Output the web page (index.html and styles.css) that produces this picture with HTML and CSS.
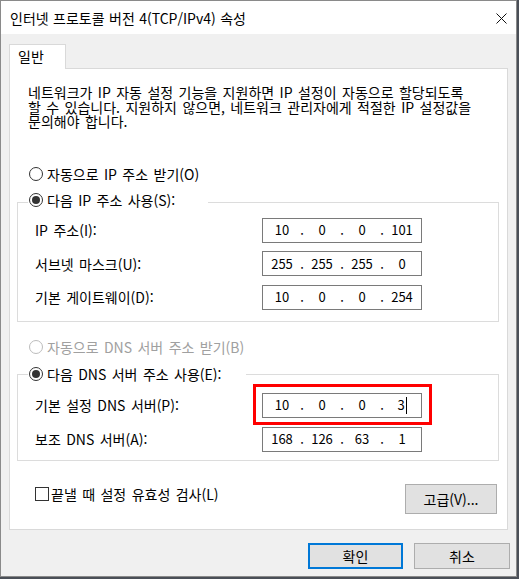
FILE: index.html
```html
<!DOCTYPE html>
<html lang="ko">
<head>
<meta charset="utf-8">
<title>인터넷 프로토콜 버전 4(TCP/IPv4) 속성</title>
<link rel="stylesheet" href="styles.css">
</head>
<body>
<div class="window">
  <div class="titlebar">
    <span class="title">인터넷 프로토콜 버전 4(TCP/IPv4) 속성</span>
    <svg class="close" viewBox="0 0 11 11" width="11" height="11"><path d="M0.5 0.5 L10.5 10.5 M10.5 0.5 L0.5 10.5" stroke="#111" stroke-width="1" fill="none"/></svg>
  </div>
  <div class="body">
    <div class="tabs"><div class="tab">일반</div></div>
    <div class="panel">
      <div class="desc">
        <span class="dline">네트워크가 IP 자동 설정 기능을 지원하면 IP 설정이 자동으로 할당되도록</span>
        <span class="dline">할 수 있습니다. 지원하지 않으면, 네트워크 관리자에게 적절한 IP 설정값을</span>
        <span class="dline">문의해야 합니다.</span>
      </div>

      <div class="opt opt-auto-ip"><span class="radio"></span><span>자동으로 IP 주소 받기(O)</span></div>

      <div class="group g-ip">
        <div class="legend legend-ip"><span class="radio on"></span><span>다음 IP 주소 사용(S):</span></div>
        <div class="rows rows-ip">
          <div class="row"><span class="lbl">IP 주소(I):</span>
            <div class="ipbox"><span class="oct">10</span><span class="dot">.</span><span class="oct">0</span><span class="dot">.</span><span class="oct">0</span><span class="dot">.</span><span class="oct">101</span></div>
          </div>
          <div class="row"><span class="lbl">서브넷 마스크(U):</span>
            <div class="ipbox"><span class="oct">255</span><span class="dot">.</span><span class="oct">255</span><span class="dot">.</span><span class="oct">255</span><span class="dot">.</span><span class="oct">0</span></div>
          </div>
          <div class="row"><span class="lbl">기본 게이트웨이(D):</span>
            <div class="ipbox"><span class="oct">10</span><span class="dot">.</span><span class="oct">0</span><span class="dot">.</span><span class="oct">0</span><span class="dot">.</span><span class="oct">254</span></div>
          </div>
        </div>
      </div>

      <div class="opt opt-auto-dns disabled"><span class="radio dis"></span><span>자동으로 DNS 서버 주소 받기(B)</span></div>

      <div class="group g-dns">
        <div class="legend legend-dns"><span class="radio on"></span><span>다음 DNS 서버 주소 사용(E):</span></div>
        <div class="rows rows-dns">
          <div class="row"><span class="lbl">기본 설정 DNS 서버(P):</span>
            <div class="ipwrap">
              <div class="ipbox"><span class="oct">10</span><span class="dot">.</span><span class="oct">0</span><span class="dot">.</span><span class="oct">0</span><span class="dot">.</span><span class="oct">3<span class="caret"></span></span></div>
              <div class="hl"></div>
            </div>
          </div>
          <div class="row"><span class="lbl">보조 DNS 서버(A):</span>
            <div class="ipbox"><span class="oct">168</span><span class="dot">.</span><span class="oct">126</span><span class="dot">.</span><span class="oct">63</span><span class="dot">.</span><span class="oct">1</span></div>
          </div>
        </div>
      </div>

      <div class="bottom">
        <div class="check"><span class="box"></span><span>끝낼 때 설정 유효성 검사(L)</span></div>
        <div class="btn btn-adv">고급(V)...</div>
      </div>
    </div>
    <div class="actions">
      <div class="btn btn-ok">확인</div>
      <div class="btn btn-cancel">취소</div>
    </div>
  </div>
</div>
</body>
</html>
```

FILE: styles.css
```css
* { box-sizing: border-box; }
html, body { margin: 0; padding: 0; }
body {
  background: #4a4f57;
  width: 519px;
  height: 579px;
  overflow: hidden;
  font-family: "Noto Sans CJK KR", "Noto Sans", sans-serif;
  font-size: 14px;
  word-spacing: 1.5px;
  color: #000;
}
.window {
  width: 517px;
  height: 577px;
  border: 1px solid #8a8a8a;
  background: #f0f0f0;
  display: flex;
  flex-direction: column;
}
.titlebar {
  flex: none;
  height: 33px;
  background: #fff;
  display: flex;
  align-items: center;
  justify-content: space-between;
  padding: 0 9px 0 9px;
}
.title { line-height: 16px; word-spacing: 0.5px; }
.close { display: block; margin-top: 1px; }
.body {
  flex: 1;
  display: flex;
  flex-direction: column;
  padding: 10px 8px 0 8px;
}
.tabs { display: flex; }
.tab {
  position: relative;
  z-index: 1;
  width: 57px;
  height: 25px;
  border: 1px solid #d9d9d9;
  border-bottom: none;
  background: #fff;
  margin-bottom: -1px;
  padding: 3px 0 0 8px;
  line-height: 16px;
}
.panel {
  width: 499px;
  height: 462px;
  border: 1px solid #d9d9d9;
  background: #fff;
  display: flex;
  flex-direction: column;
}
.desc {
  display: flex;
  flex-direction: column;
  margin: 16px 0 0 18px;
}
.dline {
  display: block;
  height: 14.5px;
  line-height: 14.5px;
  white-space: nowrap;
}
.opt {
  display: flex;
  align-items: center;
  gap: 4px;
  height: 16px;
  line-height: 16px;
  margin-left: 19px;
}
.opt-auto-ip { margin-top: 37px; }
.opt-auto-dns { margin-top: 17px; }
.disabled { color: #a0a0a0; }
.radio {
  flex: none;
  width: 14px;
  height: 14px;
  border-radius: 50%;
  border: 1px solid #333;
  background: #fff;
  display: flex;
  align-items: center;
  justify-content: center;
}
.radio.on::after {
  content: "";
  width: 8px;
  height: 8px;
  border-radius: 50%;
  background: #333;
}
.radio.dis { border-color: #bcbcbc; }
.group {
  width: 482px;
  margin: 20px 0 0 7px;
  border: 1px solid #dcdcdc;
  display: flex;
  flex-direction: column;
}
.g-dns { margin-top: 19px; }
.legend {
  display: flex;
  align-items: center;
  gap: 4px;
  height: 16px;
  line-height: 16px;
  margin: -11px 0 0 10px;
  padding-left: 1px;
  background: #fff;
}
.legend-ip { width: 180px; }
.legend-dns { width: 218px; margin-top: -9px; }
.rows {
  display: flex;
  flex-direction: column;
  padding: 0 0 11px 17px;
}
.rows-ip { gap: 8.5px; margin-top: 10px; }
.rows-dns { gap: 9px; margin-top: 11px; padding-bottom: 8px; }
.row {
  display: flex;
  align-items: center;
}
.lbl { width: 227px; line-height: 16px; }
.ipwrap { position: relative; }
.ipbox {
  width: 160px;
  height: 25px;
  border: 1px solid #7a7a7a;
  background: #fff;
  display: flex;
  align-items: center;
  padding: 0 2px;
  font-size: 13px;
  word-spacing: 0;
  line-height: 16px;
}
.oct { width: 34px; display: flex; align-items: center; justify-content: center; }
.dot { width: 6px; text-align: center; }
.caret {
  display: inline-block;
  width: 1px;
  height: 17px;
  background: #000;
  margin-left: 1px;
}
.hl {
  position: absolute;
  left: -9px;
  top: -9px;
  width: 179px;
  height: 41px;
  border: 3px solid #ff0000;
  pointer-events: none;
}
.bottom {
  display: flex;
  justify-content: space-between;
  align-items: flex-start;
  margin: 23px 10px 0 25px;
}
.check {
  display: flex;
  align-items: center;
  gap: 2px;
  height: 16px;
  line-height: 16px;
  margin-top: 2px;
}
.box {
  width: 14px;
  height: 14px;
  border: 1px solid #333;
  background: #fff;
}
.btn {
  display: flex;
  align-items: center;
  justify-content: center;
  background: #e1e1e1;
  border: 1px solid #adadad;
  line-height: 16px;
}
.btn-adv { width: 92px; height: 30px; }
.actions {
  display: flex;
  justify-content: flex-end;
  gap: 11px;
  margin: 13px -2px 0 0;
}
.btn-ok { width: 95px; height: 26px; border: 2px solid #0078d7; }
.btn-cancel { width: 96px; height: 26px; }
```
